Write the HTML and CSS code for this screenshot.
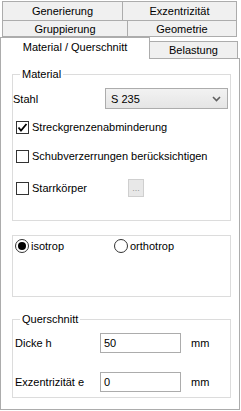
FILE: index.html
```html
<!DOCTYPE html>
<html lang="de">
<head>
  <meta charset="UTF-8" />
  <meta name="viewport" content="width=device-width, initial-scale=1.0" />
  <title>Material / Querschnitt</title>
  <link rel="stylesheet" href="styles.css">
</head>
<body>
  <div class="tabs">
    <div class="tab-row row1">
      <div class="tab t-gen">Generierung</div>
      <div class="tab t-exz">Exzentrizität</div>
    </div>
    <div class="tab-row row2">
      <div class="tab t-grp">Gruppierung</div>
      <div class="tab t-geo">Geometrie</div>
    </div>
    <div class="tab-row row3">
      <div class="tab tab-active t-mat">Material / Querschnitt</div>
      <div class="tab t-bel">Belastung</div>
    </div>
  </div>

  <div class="panel">
    <!-- Material -->
    <fieldset class="group group-material">
      <legend>Material</legend>
      <div class="row row-stahl">
        <span class="lbl-stahl">Stahl</span>
        <div class="select">
          <span>S 235</span>
          <svg width="9" height="6" viewBox="0 0 9 6"><polyline points="1,1 4.5,4.5 8,1" fill="none" stroke="#606060" stroke-width="1.6"/></svg>
        </div>
      </div>
      <label class="row check row-c1">
        <span class="box"><svg width="11" height="11" viewBox="0 0 11 11"><polyline points="1.5,5.5 4,8.5 9.5,2" fill="none" stroke="#000" stroke-width="1.8"/></svg></span>
        Streckgrenzenabminderung
      </label>
      <label class="row check row-c2">
        <span class="box"></span>
        Schubverzerrungen berücksichtigen
      </label>
      <div class="row check row-c3">
        <span class="box"></span>
        <span class="lbl-starr">Starrkörper</span>
        <span class="dots">...</span>
      </div>
    </fieldset>

    <!-- Isotrop / Orthotrop -->
    <div class="group group-radio">
      <div class="radio-row">
        <span class="radio-item r-iso"><span class="radio on"></span>isotrop</span>
        <span class="radio-item"><span class="radio"></span>orthotrop</span>
      </div>
    </div>

    <!-- Querschnitt -->
    <fieldset class="group group-qs">
      <legend>Querschnitt</legend>
      <div class="row field row-f1">
        <span class="flabel">Dicke h</span>
        <span class="input">50</span>
        <span class="unit">mm</span>
      </div>
      <div class="row field row-f2">
        <span class="flabel">Exzentrizität e</span>
        <span class="input">0</span>
        <span class="unit">mm</span>
      </div>
    </fieldset>
  </div>
</body>
</html>
```

FILE: styles.css
```css
* {
  box-sizing: border-box;
}
body {
  margin: 0;
  width: 241px;
  height: 411px;
  background-color: #fff;
  font-family: "Liberation Sans", Arial, sans-serif;
  font-size: 11px;
  color: #000;
  overflow: hidden;
}

/* Tabs */
.tabs {
  padding-top: 1px;
}
.tab-row {
  display: flex;
}
.tab {
  display: flex;
  align-items: center;
  justify-content: center;
  background-color: #f0f0f0;
  border: 1px solid #acacac;
  white-space: nowrap;
}
.tab + .tab {
  margin-left: -1px;
}
.row1 {
  margin-left: 2px;
  height: 20px;
}
.row2 {
  margin-left: 2px;
  margin-top: -1px;
  height: 17px;
}
.row3 {
  position: relative;
  z-index: 1;
  align-items: flex-end;
  margin-bottom: -1px;
  height: 22px;
}
.t-gen { width: 121px; }
.t-exz { width: 115px; }
.t-grp { width: 126px; }
.t-geo { width: 110px; }
.t-mat {
  width: 150px;
  height: 22px;
  padding-bottom: 3px;
}
.t-bel {
  width: 89px;
  height: 18px;
}
.tab-active {
  background-color: #fff;
  border-bottom: none;
}

/* Panel */
.panel {
  width: 240px;
  height: 352px;
  border: 1px solid #acacac;
  background-color: #fff;
  padding-left: 11px;
  padding-top: 9px;
}

.group {
  width: 219px;
  margin: 0;
  border: 1px solid #dcdcdc;
  padding: 0;
}
fieldset.group legend {
  margin-left: 7px;
  padding: 0 2px;
  line-height: 13px;
}
.row {
  display: flex;
  align-items: center;
}

/* Material */
.group-material {
  padding-bottom: 22px;
}
.row-stahl {
  height: 21px;
  margin-top: 7px;
}
.lbl-stahl {
  width: 92px;
}
.select {
  width: 123px;
  height: 21px;
  display: flex;
  align-items: center;
  justify-content: space-between;
  padding: 0 6px 0 5px;
  border: 1px solid #acacac;
  background: linear-gradient(#f2f2f2, #e5e5e5);
}
.check {
  height: 20px;
  padding-left: 3px;
}
.row-c1 { margin-top: 8px; }
.row-c2 { margin-top: 9px; }
.row-c3 { margin-top: 12px; }
.box {
  width: 13px;
  height: 13px;
  border: 1px solid #333;
  background-color: #fff;
  margin-right: 3px;
  display: flex;
  align-items: center;
  justify-content: center;
  flex: none;
}
.lbl-starr {
  width: 96px;
}
.dots {
  width: 16px;
  height: 18px;
  border: 1px solid #cfcfcf;
  background-color: #e8e8e8;
  color: #9a9a9a;
  font-size: 9px;
  display: flex;
  align-items: flex-end;
  justify-content: center;
  padding-bottom: 3px;
  margin-top: -1px;
}

/* Radios */
.group-radio {
  height: 62px;
  margin-top: 14px;
  padding: 3px 0 0 2px;
}
.radio-row {
  display: flex;
  align-items: center;
}
.radio-item {
  display: flex;
  align-items: center;
}
.r-iso {
  width: 99px;
}
.radio {
  width: 14px;
  height: 14px;
  border: 1px solid #333;
  border-radius: 50%;
  margin-right: 2px;
  display: flex;
  align-items: center;
  justify-content: center;
}
.radio.on::after {
  content: "";
  width: 8px;
  height: 8px;
  border-radius: 50%;
  background-color: #000;
}

/* Querschnitt */
.group-qs {
  margin-top: 16px;
  padding-bottom: 5px;
}
.field {
  height: 20px;
  padding-left: 2px;
}
.row-f1 { margin-top: 7px; }
.row-f2 { margin-top: 19px; }
.flabel {
  width: 85px;
}
.input {
  width: 81px;
  height: 20px;
  border: 1px solid #acacac;
  padding-left: 3px;
  display: flex;
  align-items: center;
}
.unit {
  margin-left: 10px;
}
```
